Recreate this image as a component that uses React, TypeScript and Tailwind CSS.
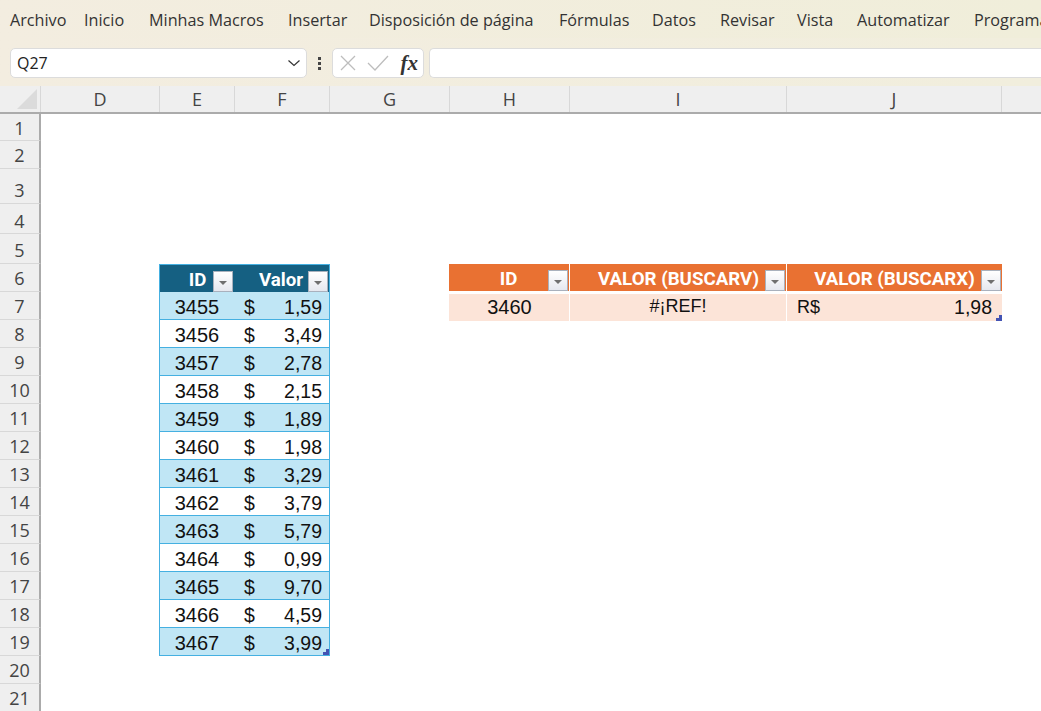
import type { ReactNode } from 'react';

const tabs = [
  { label: 'Archivo', width: 'w-[74px]' },
  { label: 'Inicio', width: 'w-[65px]' },
  { label: 'Minhas Macros', width: 'w-[139px]' },
  { label: 'Insertar', width: 'w-[81px]' },
  { label: 'Disposición de página', width: 'w-[190px]' },
  { label: 'Fórmulas', width: 'w-[93px]' },
  { label: 'Datos', width: 'w-[68px]' },
  { label: 'Revisar', width: 'w-[77px]' },
  { label: 'Vista', width: 'w-[60px]' },
  { label: 'Automatizar', width: 'w-[117px]' },
  { label: 'Programador', width: 'w-[110px]' },
];

const columns = [
  { label: 'D', width: 'w-[119px]' },
  { label: 'E', width: 'w-[75px]' },
  { label: 'F', width: 'w-[95px]' },
  { label: 'G', width: 'w-[120px]' },
  { label: 'H', width: 'w-[120px]' },
  { label: 'I', width: 'w-[217px]' },
  { label: 'J', width: 'w-[215px]' },
  { label: '', width: 'w-[40px]' },
];

const products = [
  ['3455', '1,59'],
  ['3456', '3,49'],
  ['3457', '2,78'],
  ['3458', '2,15'],
  ['3459', '1,89'],
  ['3460', '1,98'],
  ['3461', '3,29'],
  ['3462', '3,79'],
  ['3463', '5,79'],
  ['3464', '0,99'],
  ['3465', '9,70'],
  ['3466', '4,59'],
  ['3467', '3,99'],
];

const rowHeights: Record<number, string> = { 1: 'h-[27px]', 3: 'h-[35px]', 4: 'h-[30px]', 5: 'h-[30px]' };
const labelPadding: Record<number, string> = { 3: 'pt-[9px]', 4: 'pt-[5px]', 5: 'pt-[4px]' };

function FilterButton() {
  return (
    <div className="absolute right-px top-[6px] flex h-[21px] w-[20px] items-center justify-center border border-[#a9b1bd] bg-gradient-to-b from-white to-[#e6e8ef]">
      <div className="mt-[2px] h-0 w-0 border-x-[4px] border-t-[4px] border-x-transparent border-t-[#6f6f6f]" />
    </div>
  );
}

function ResizeHandle() {
  return (
    <svg className="absolute bottom-0 right-0" width="6" height="6" viewBox="0 0 6 6">
      <path d="M3 0h3v6H0V3h3z" fill="#4353b3" />
    </svg>
  );
}

function LeftTable({ row }: { row: number }) {
  if (row === 6) {
    return (
      <div className="flex h-full w-[171px] border-x border-t border-[#45b0e1] bg-[#156082] font-['Roboto',sans-serif] text-[18.7px] font-bold text-white">
        <div className="relative w-[74px] pl-[1px] text-center leading-[30px]">
          ID
          <FilterButton />
        </div>
        <div className="relative flex-1 pl-[25px] leading-[30px]">
          Valor
          <FilterButton />
        </div>
      </div>
    );
  }
  const item = products[row - 7];
  if (!item) return null;
  const band = row % 2 === 1 ? 'bg-[#c0e6f5]' : 'bg-white';
  return (
    <div className={`relative flex h-full w-[171px] border-x border-b border-[#45b0e1] font-['Liberation_Sans',sans-serif] text-[20px] leading-[30px] text-[#111] ${band}`}>
      <div className="w-[74px] text-center">{item[0]}</div>
      <div className="flex flex-1 justify-between pl-[10px] pr-[7px] text-[19.5px]">
        <span>$</span>
        <span>{item[1]}</span>
      </div>
      {row === 19 && <ResizeHandle />}
    </div>
  );
}

function RightTable({ row }: { row: number }) {
  if (row === 6) {
    return (
      <div className="flex h-[27px] gap-px font-['Roboto',sans-serif] text-[18.7px] font-bold text-white">
        <div className="relative w-[120px] bg-[#e97132] pr-[1px] text-center leading-[30px]">
          ID
          <FilterButton />
        </div>
        <div className="relative w-[216px] bg-[#e97132] pl-[1px] text-center leading-[30px]">
          VALOR (BUSCARV)
          <FilterButton />
        </div>
        <div className="relative w-[215px] bg-[#e97132] text-center leading-[30px]">
          VALOR (BUSCARX)
          <FilterButton />
        </div>
      </div>
    );
  }
  if (row !== 7) return null;
  return (
    <div className="mt-[2px] flex h-[27px] gap-px font-['Liberation_Sans',sans-serif] text-[20px] leading-[27px] text-[#111]">
      <div className="w-[120px] bg-[#fce4d8] pl-[1px] text-center">3460</div>
      <div className="w-[216px] bg-[#fce4d8] text-center text-[18px] leading-[25px]">#¡REF!</div>
      <div className="relative flex w-[215px] justify-between bg-[#fce4d8] pl-[10px] pr-[10px] text-[19.5px]">
        <span className="text-[18px]">R$</span>
        <span>1,98</span>
        <ResizeHandle />
      </div>
    </div>
  );
}

function SheetRow({ row }: { row: number }) {
  const height = rowHeights[row] ?? 'h-[28px]';
  return (
    <div className={`flex ${height}`}>
      <RowLabel row={row}>{row}</RowLabel>
      <div className="w-[118px] shrink-0" />
      <div className="w-[170px] shrink-0">
        <LeftTable row={row} />
      </div>
      <div className="w-[120px] shrink-0" />
      <div className="w-[553px] shrink-0">
        <RightTable row={row} />
      </div>
    </div>
  );
}

function RowLabel({ row, children }: { row: number; children: ReactNode }) {
  const padding = labelPadding[row] ?? 'pt-[2px]';
  return (
    <div className={`flex w-[41px] shrink-0 items-center justify-center border-b border-r-2 border-b-[#d8d8d8] border-r-[#ababab] bg-[#efefef] text-[18px] text-[#444] ${padding}`}>
      {children}
    </div>
  );
}

export default function App() {
  const rows = Array.from({ length: 21 }, (_, i) => i + 1);

  return (
    <div className="h-screen overflow-hidden bg-white font-['Open_Sans',sans-serif]">
      {/* menu */}
      <div className="flex h-[38px] items-center overflow-hidden whitespace-nowrap bg-gradient-to-r from-[#f3ede0] to-[#f0eeda] pt-[2px] pl-[10px] text-[16.2px] text-[#333] shadow-[0_2px_3px_rgba(0,0,0,0.18)]">
        {tabs.map((t) => (
          <div key={t.label} className={`shrink-0 ${t.width}`}>
            {t.label}
          </div>
        ))}
      </div>

      {/* formula bar */}
      <div className="flex h-[48px] items-center bg-gradient-to-r from-[#f3ede0] to-[#f1eedd] pl-[10px] pt-[2px]">
        <div className="flex h-[30px] w-[297px] shrink-0 items-center justify-between rounded-[5px] border border-[#dcdcdc] bg-white pl-[6px] pr-[4px] text-[16px] text-[#222]">
          Q27
          <svg width="16" height="16" viewBox="0 0 16 16" fill="none" stroke="#333" strokeWidth="1.2">
            <path d="M2.5 5.5 8 10.5l5.5-5" />
          </svg>
        </div>
        <div className="flex w-[25px] shrink-0 flex-col items-center gap-[2px]">
          <div className="h-[3px] w-[3px] bg-[#444]" />
          <div className="h-[3px] w-[3px] bg-[#444]" />
          <div className="h-[3px] w-[3px] bg-[#444]" />
        </div>
        <div className="flex h-[30px] w-[92px] shrink-0 items-center rounded-[5px] border border-[#dcdcdc] bg-white pl-[6px] pr-[5px]">
          <svg width="18" height="18" viewBox="0 0 18 18" fill="none" stroke="#bdbdbd" strokeWidth="1.3">
            <path d="M2 2l14 14M16 2 2 16" />
          </svg>
          <svg className="ml-[10px]" width="22" height="18" viewBox="0 0 22 18" fill="none" stroke="#bdbdbd" strokeWidth="1.3">
            <path d="M1 9l7 7L21 2" />
          </svg>
          <span className="ml-auto font-['Liberation_Serif',serif] text-[21px] font-bold italic leading-none text-[#333]">fx</span>
        </div>
        <div className="ml-[5px] h-[30px] flex-1 rounded-l-[5px] border border-r-0 border-[#dcdcdc] bg-white" />
      </div>

      {/* column headers */}
      <div className="flex h-[28px] border-b-2 border-[#ababab] bg-[#efefef] text-[18px] text-[#444]">
        <div className="relative w-[41px] shrink-0 border-r border-[#d8d8d8]">
          <svg className="absolute bottom-[3px] right-[3px]" width="20" height="20" viewBox="0 0 20 20">
            <path d="M20 0v20H0z" fill="#dbdbdb" />
          </svg>
        </div>
        {columns.map((c) => (
          <div key={c.label} className={`flex shrink-0 items-center justify-center border-r border-[#d8d8d8] ${c.width}`}>
            {c.label}
          </div>
        ))}
      </div>

      {/* sheet */}
      {rows.map((row) => (
        <SheetRow key={row} row={row} />
      ))}
    </div>
  );
}
